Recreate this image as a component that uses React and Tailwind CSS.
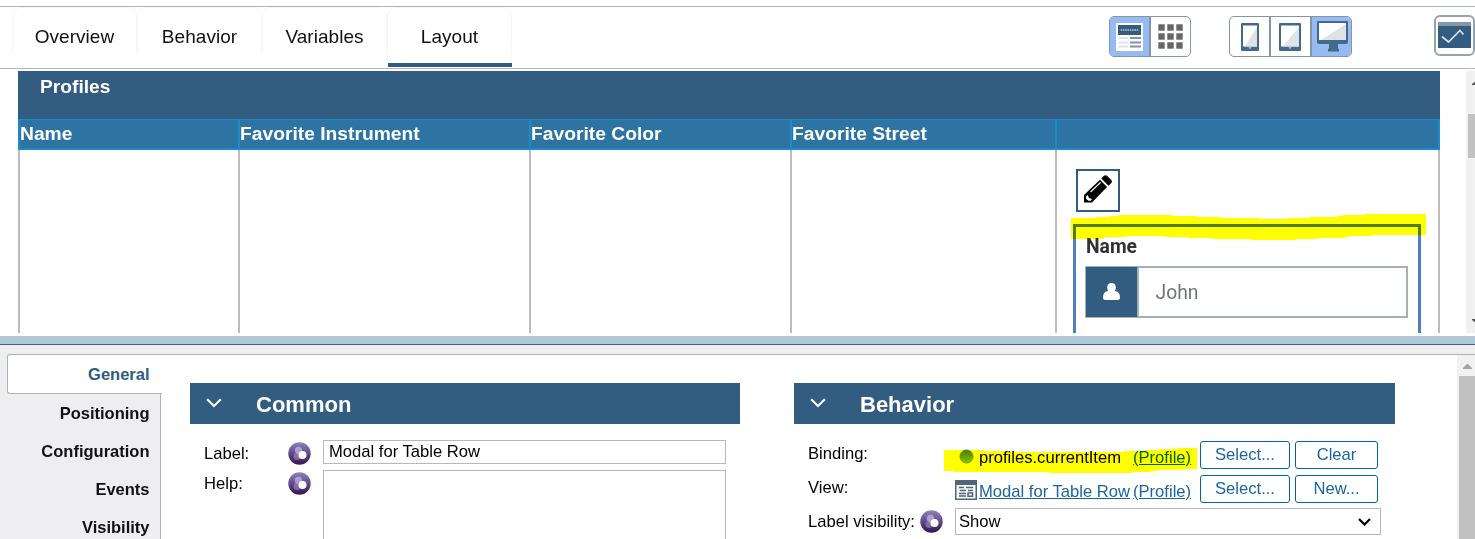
import React from "react";

function Tab({ label, active }) {
  return (
    <div className={"flex h-[61px] w-[125px] flex-col rounded-t-[9px] border-t border-[#f6f6f6] " + (active ? "border-x" : "border-x [mask-image:linear-gradient(#000_75%,transparent_76%)]")}>
      <div className="flex h-[55px] items-center justify-center pt-[3px] text-[19px] tracking-[0.04px] text-[#111]">{label}</div>
      {active && <div className="-mr-px h-1 shrink-0 bg-[#325c80]" />}
    </div>
  );
}

function LayoutIcon() {
  return (
    <svg width="27" height="28" viewBox="0 0 27 28">
      <rect width="27" height="28" fill="#fff" />
      <rect x="2" y="2" width="23" height="10" fill="#325c80" />
      <path d="M4.500 7h18" stroke="#8ea7bb" strokeWidth="2.200" strokeDasharray="1.700 .6" />
      <path d="M2.500 15h10M2.500 19.500h10M2.500 23.500h10" stroke="#dfe3e8" strokeWidth="2" />
      <path d="M14 15h11M14 19.500h11M14 23.500h11" stroke="#8293a2" strokeWidth="2" />
    </svg>
  );
}

function GridIcon() {
  return (
    <svg width="25" height="25" viewBox="0 0 25 25" fill="#666">
      {[0, 9, 18].map((y) => [0, 9, 18].map((x) => <rect key={x + "-" + y} x={x + 0.3} y={y + 0.3} width="6.4" height="6.4" />))}
    </svg>
  );
}

function DeviceIcon({ w }) {
  return (
    <svg width={w} height="28" viewBox={`0 0 ${w} 28`}>
      <rect width={w} height="28" rx="1" fill="#436a8c" />
      <rect x="2" y="2.500" width={w - 4} height="21" fill="#fff" />
      <path d={`M${w - 2} 4V23.500H4z`} fill="#dfe3e6" />
      <path d={`M${w / 2 - 1.5} 24.300h3l-1.500 2z`} fill="#c4d3df" />
    </svg>
  );
}

function DesktopIcon() {
  return (
    <svg width="31" height="31" viewBox="0 0 31 31">
      <path d="M1 0h29q1 0 1 1v20q0 2-2 2h-8v4q0 1 1 1v2.500H11V28q1 0 1-1v-4H2q-2 0-2-2V1Q0 0 1 0z" fill="#436a8c" />
      <rect x="2" y="2" width="27" height="17" fill="#fff" />
      <path d="M29 3v16H4z" fill="#dde2e6" />
    </svg>
  );
}

function ChartIcon() {
  return (
    <svg width="33" height="26" viewBox="0 0 33 26">
      <rect width="33" height="26" fill="#325c80" />
      <rect width="33" height="4" fill="#8896a5" />
      <path d="M4 14.500l6.500 5.500L22 8.500l3.500 4" fill="none" stroke="#d6e0e8" strokeWidth="1.700" />
    </svg>
  );
}

function Orb({ id }) {
  return (
    <svg className="shrink-0" width="23" height="23" viewBox="0 0 23 23">
      <defs>
        <linearGradient id={id} x1="0" y1="0" x2="0" y2="1">
          <stop offset="0" stopColor="#9182bd" />
          <stop offset=".5" stopColor="#5f4a8c" />
          <stop offset="1" stopColor="#371550" />
        </linearGradient>
      </defs>
      <circle cx="11.500" cy="11.500" r="11.200" fill={`url(#${id})`} />
      <circle cx="10.500" cy="8.500" r="3.700" fill="#c2b8d8" opacity=".75" />
      <circle cx="9" cy="14.500" r="3.400" fill="#a79abd" opacity=".55" />
      <circle cx="14.500" cy="13" r="4" fill="#fff" />
    </svg>
  );
}

function ViewIcon() {
  return (
    <svg width="22" height="20" viewBox="0 0 22 20">
      <rect width="22" height="20" fill="#526577" />
      <rect x="1.500" y="5" width="19" height="13.500" fill="#f5f7f8" />
      <path d="M4 7.500h5M11 7.500h7M5 10.500h6M4 13.500h7M4 16h7" stroke="#526577" strokeWidth="1.400" />
      <path d="M13 13h4.500v3.200H13zM13 10.500h5" fill="none" stroke="#526577" strokeWidth="1.500" />
    </svg>
  );
}

function Chevron() {
  return (
    <svg width="16" height="10" viewBox="0 0 16 10">
      <path d="M1.200 1.200L8 8l6.800-6.800" fill="none" stroke="#fff" strokeWidth="2" />
    </svg>
  );
}

function SectionHeader({ title }) {
  return (
    <div className="flex h-[41px] items-center bg-[#325c80] pb-[2px] pl-4 text-white">
      <Chevron />
      <h2 className="ml-[34px] pt-[5px] text-[22px] leading-[38px] font-bold">{title}</h2>
    </div>
  );
}

function Btn({ children, wide }) {
  return (
    <button className={(wide ? "w-[90px]" : "w-[83px]") + " h-7 shrink-0 rounded-[3px] border border-[#00649d] bg-white text-[16.600px] leading-[26px] text-[#1a659c]"}>{children}</button>
  );
}

const columns = [
  { label: "Name", width: "w-[220px]" },
  { label: "Favorite Instrument", width: "w-[291px]" },
  { label: "Favorite Color", width: "w-[261px]" },
  { label: "Favorite Street", width: "w-[265px]" },
  { label: "", width: "w-[385px]" },
];

function RowModal() {
  return (
    <div className="relative ml-[17px] pt-[19px]">
      <div className="ml-[2px] flex h-[43px] w-11 items-center justify-center border-2 border-[#325c80] bg-white pb-[3px]">
        <svg width="28" height="28" viewBox="0 0 28 28">
          <path d="M0 20L16 4.800l7 7.200-15 15.500H0z" fill="#000" />
          <path d="M17.300 3.400L20 .8q1.500-1.200 3 0L27.300 5q1.200 1.500 0 3l-2.800 2.800z" fill="#000" />
          <path d="M6.500 17L16.500 7.500" stroke="#fff" strokeWidth="1.100" />
          <path d="M2 21.500l1.700-1.500 1.300 3 3 1-1.500 1.700H4.300L2 23.700z" fill="#fff" />
        </svg>
      </div>
      <div className="mt-3 -ml-px h-[120px] w-[348px] border-[3px] border-b-0 border-[#507fbf] pt-[9px] pl-[9px]">
        <div className="ml-px text-[19.300px] leading-[22px] font-bold text-[#333] [font-family:Roboto,sans-serif]">Name</div>
        <div className="mt-2 flex h-[52px] w-[323px] border-2 border-[#a4b1b4] bg-white">
          <div className="-my-px -ml-px flex w-[53px] items-center justify-center border-r-2 border-[#a4b1b4] bg-[#325c80] pb-px">
            <svg width="17" height="17" viewBox="0 0 17 17" fill="#fff">
              <path d="M8.500 0q4.300 0 4.300 4.500 0 2-1 3.500Q17 8.500 17 14.500q0 2.500-2.500 2.500h-12Q0 17 0 14.500 0 8.500 5.200 8q-1-1.500-1-3.500Q4.200 0 8.500 0z" />
            </svg>
          </div>
          <span className="pl-[16.500px] text-[19.300px] leading-[49px] text-[#70757b] [font-family:Roboto,sans-serif]">John</span>
        </div>
      </div>
      <svg className="absolute top-[63px] -left-[3px] mix-blend-multiply" width="356" height="28" viewBox="93 189 1068 84">
        <path fill="#ff0" d="M93 204H168V201H208V198H237V195H396V198H468V201H540V204H660V207H744V204H807V201H891V198H906V195H972V192H1158V255H996V258H930V261H915V264H831V267H768V270H636V267H516V264H444V261H372V258H261V261H192V267H93z" />
      </svg>
    </div>
  );
}

function Preview() {
  return (
    <div className="flex h-[267px] justify-between pt-[2px] pb-[3px] pl-[18px]">
      <div className="flex w-[1422px] flex-col overflow-hidden">
        <div className="h-12 shrink-0 bg-[#325c80] pl-[22px] text-[19.200px] leading-[31px] font-bold text-white">Profiles</div>
        <div className="flex h-[31px] shrink-0 border-t border-b-2 border-[#1d8acb] bg-[#2d74a3]">
          {columns.map((c, i) => (
            <div key={i} className={c.width + " shrink-0 border-[#1d8acb] text-[19.250px] leading-[27px] font-bold whitespace-nowrap text-white " + (i === 4 ? "border-x-2" : "border-l-2")}>{c.label}</div>
          ))}
        </div>
        <div className="flex grow">
          {columns.map((c, i) => (
            <div key={i} className={c.width + " shrink-0 border-[#bdbdbd] " + (i === 4 ? "border-x-2" : "border-l-2")}>
              {i === 4 && <RowModal />}
            </div>
          ))}
        </div>
      </div>
      <div className="flex w-[9px] flex-col overflow-hidden bg-[#f1f1f1]">
        <svg width="9" height="262" viewBox="0 0 9 262">
          <path d="M6 14v-1l4-3v4z" fill="#505050" />
          <rect x="2" y="43" width="7" height="44" fill="#c1c1c1" />
          <path d="M6 248v1l4 3v-4z" fill="#505050" />
        </svg>
      </div>
    </div>
  );
}

export default function App() {
  return (
    <div className="h-[539px] w-[1475px] overflow-hidden bg-white text-black [font-family:'Liberation_Sans',Arial,sans-serif]">
      <header className="mt-[6px] flex h-[63px] border-y border-t-[#aab6b6] border-b-[#b2b6c6]">
        <nav className="ml-3 flex">
          <Tab label="Overview" />
          <Tab label="Behavior" />
          <Tab label="Variables" />
          <Tab label="Layout" active />
        </nav>
        <div className="mt-[9px] ml-[597px] flex h-[41px] w-[82px] overflow-hidden rounded-[5px] border border-[#8496a4]">
          <div className="flex w-[41px] items-center border-r-2 border-[#8496a4] bg-[#96bbf2] pl-[6px]"><LayoutIcon /></div>
          <div className="flex grow items-center justify-center"><GridIcon /></div>
        </div>
        <div className="mt-[9px] ml-[38px] flex h-[41px] w-[124px] overflow-hidden rounded-[5px] border border-[#8496a4]">
          <div className="flex w-[41px] items-center border-r-2 border-[#8496a4] pl-[11px]"><DeviceIcon w={18} /></div>
          <div className="flex w-[41px] items-center border-r-2 border-[#8496a4] pl-2"><DeviceIcon w={22} /></div>
          <div className="flex grow items-center bg-[#96bbf2] pl-[5px]"><DesktopIcon /></div>
        </div>
        <div className="mt-2 ml-[82px] flex h-[41px] w-[41px] shrink-0 items-center justify-center rounded-[6px] border-2 border-[#95a3ae] pb-px"><ChartIcon /></div>
      </header>

      <Preview />

      <div className="h-[9px] border-b border-[#4b6078] bg-[#b0c8d8]" />

      <div className="flex h-[194px] bg-[#eeeef0] pt-[9px]">
        <aside className="flex w-[162px] shrink-0 flex-col pl-[7px] text-right text-[16.500px] font-bold">
          <div className="relative z-10 h-10 rounded-l-[3px] border border-r-0 border-[#aab6b6] bg-white pr-[12.500px] leading-[39px] text-[#325c80]">General</div>
          <div className="mr-px flex grow flex-col border-r border-[#aab6b6] pr-[10.500px] leading-[38px] text-[#111]">
            <div>Positioning</div>
            <div>Configuration</div>
            <div>Events</div>
            <div>Visibility</div>
          </div>
        </aside>
        <main className="-ml-px flex grow border-t border-[#aab6b6] bg-white pt-7 pl-[29px] text-[16.600px]">
          <section className="w-[550px] shrink-0">
            <SectionHeader title="Common" />
            <div className="mt-4 flex h-6 pl-[14px]">
              <span className="w-[84px] leading-[28px]">Label:</span>
              <div className="mt-[2px]"><Orb id="orb-label" /></div>
              <div className="ml-3 h-6 w-[403px] border border-[#b4b8c6] pl-[5px] leading-[22px]">Modal for Table Row</div>
            </div>
            <div className="mt-[6px] flex pl-[14px]">
              <span className="w-[84px] leading-[28px]">Help:</span>
              <div className="mt-[2px]"><Orb id="orb-help" /></div>
              <div className="ml-3 h-[90px] w-[403px] border border-[#b4b8c6]" />
            </div>
          </section>
          <section className="ml-[54px] w-[601px] shrink-0">
            <SectionHeader title="Behavior" />
            <div className="relative mt-[17px] flex h-7 pl-[14px]">
              <span className="w-[151px] leading-[25px]">Binding:</span>
              <svg className="mt-2" width="15" height="15" viewBox="0 0 15 15">
                <defs>
                  <linearGradient id="status" x1="0" y1="0" x2="0" y2="1"><stop offset="0" stopColor="#487b00" /><stop offset="1" stopColor="#8bc43f" /></linearGradient>
                </defs>
                <circle cx="7.500" cy="7.500" r="6.700" fill="url(#status)" stroke="#6f9c2a" strokeWidth=".6" />
              </svg>
              <span className="ml-[5px] w-[154px] leading-[33px]">profiles.currentItem</span>
              <span className="w-[67px] leading-[33px] text-[#00649d] underline">(Profile)</span>
              <Btn wide>Select...</Btn>
              <div className="ml-[5px]"><Btn>Clear</Btn></div>
              <svg className="absolute top-[6px] left-[150px] mix-blend-multiply" width="253" height="26" viewBox="492 63 759 78">
                <path fill="#ff0" d="M492 72H609V75H699V78H1032V75H1095V72H1140V69H1194V66H1251V129H1209V132H1134V135H1110V138H1056V141H807V138H522V135H492z" />
              </svg>
            </div>
            <div className="mt-[6px] flex h-7 pl-[14px]">
              <span className="w-[147px] leading-[25px]">View:</span>
              <div className="mt-[5px]"><ViewIcon /></div>
              <span className="ml-[2px] w-[154px] leading-[33px] whitespace-nowrap text-[#1a659c] underline">Modal for Table Row</span>
              <span className="w-[67px] leading-[33px] text-[#1a659c] underline">(Profile)</span>
              <Btn wide>Select...</Btn>
              <div className="ml-[5px]"><Btn>New...</Btn></div>
            </div>
            <div className="mt-[5px] flex h-[27px] pl-[14px]">
              <span className="w-[112px] leading-[27px] whitespace-nowrap">Label visibility:</span>
              <div className="mt-[2px]"><Orb id="orb-visibility" /></div>
              <div className="ml-3 flex w-[426px] items-center justify-between border border-[#b4b8c6] pr-[9px] pl-[3px] leading-[24px]">
                <span>Show</span>
                <svg width="13" height="8" viewBox="0 0 13 8"><path d="M1 1l5.500 5.500L12 1" fill="none" stroke="#000" strokeWidth="2.200" /></svg>
              </div>
            </div>
          </section>
          <div className="-mt-7 ml-[62px] w-[18px] shrink-0 bg-[#f1f1f1]">
            <svg width="18" height="184" viewBox="0 0 18 184">
              <path d="M6 14v-1l4-4h1l4 4v1z" fill="#a3a3a3" />
              <rect x="2" y="21" width="16" height="163" fill="#c1c1c1" />
            </svg>
          </div>
        </main>
      </div>
    </div>
  );
}
